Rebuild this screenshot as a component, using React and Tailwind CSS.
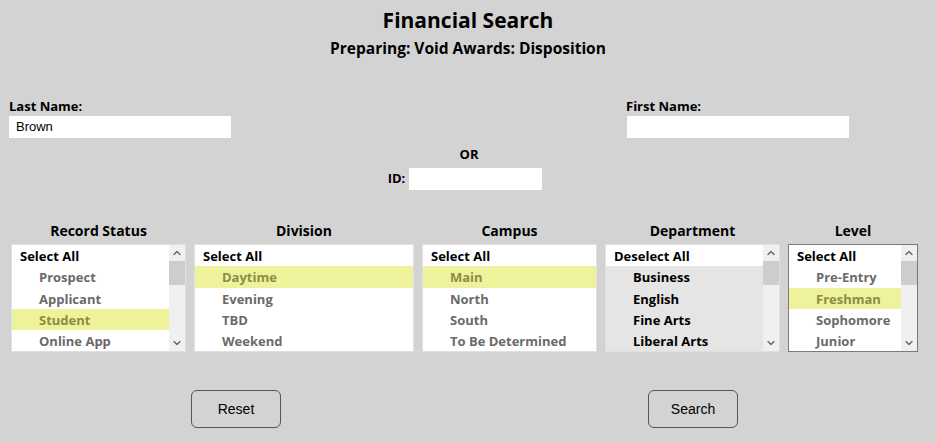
import { ChevronUp, ChevronDown } from 'lucide-react'

const fonte = "font-['Open_Sans',sans-serif]"

// Rolagem falsa no estilo da caixa de lista do Windows
function BarraRolagem() {
  return (
    <div className="w-[16px] bg-[#f0f0f0] flex flex-col items-center">
      <div className="h-[16px] flex items-center justify-center">
        <ChevronUp className="w-3 h-3 text-[#606060]" strokeWidth={2.5} />
      </div>
      <div className="w-full h-[24px] bg-[#cdcdcd]" />
      <div className="flex-1" />
      <div className="h-[16px] flex items-center justify-center">
        <ChevronDown className="w-3 h-3 text-[#606060]" strokeWidth={2.5} />
      </div>
    </div>
  )
}

function Lista({ titulo, largura, topo, itens, marcado, rolagem, foco, departamento }) {
  return (
    <div className="flex flex-col items-center" style={{ width: largura }}>
      <div className={`${fonte} text-[14px] font-bold text-black h-[28px] leading-[30px]`}>{titulo}</div>
      <div
        className={`w-full h-[108px] flex overflow-hidden border ${
          foco ? 'border-[#7a7a7a]' : 'border-[#e0e0e0]'
        } ${departamento ? 'bg-[#e5e5e5]' : 'bg-white'}`}
      >
        <div className="flex-1 flex flex-col">
          <div className={`${fonte} h-[21.25px] leading-[22px] pl-[8px] text-[13px] font-bold text-black bg-white`}>
            {topo}
          </div>
          {itens.map((item) => (
            <div
              key={item}
              className={`${fonte} h-[21.25px] leading-[22px] pl-[27px] text-[13px] font-bold whitespace-nowrap ${
                item === marcado
                  ? 'bg-[#eef39b] text-[#8c8c45]'
                  : departamento
                  ? 'text-black'
                  : 'text-[#6a6a6a]'
              }`}
            >
              {item}
            </div>
          ))}
        </div>
        {rolagem && <BarraRolagem />}
      </div>
    </div>
  )
}

export default function App() {
  return (
    <div className="w-[936px] h-[442px] bg-[#d3d3d3] overflow-hidden">
      {/* Cabeçalho */}
      <div className="flex flex-col items-center pt-[6px]">
        <h1 className={`${fonte} text-[21px] font-bold text-black leading-[28px]`}>Financial Search</h1>
        <p className={`${fonte} text-[15.5px] font-bold text-black leading-[28px]`}>
          Preparing: Void Awards: Disposition
        </p>
      </div>

      {/* Nomes */}
      <div className="flex mt-[34px] pl-[9px]">
        <div className="flex flex-col">
          <label className={`${fonte} text-[13px] font-bold text-black leading-[20px]`}>Last Name:</label>
          <div className="w-[222px] h-[22px] bg-white pl-[7px] flex items-center font-['Liberation_Sans',sans-serif] text-[13px] text-black">
            Brown
          </div>
        </div>
        <div className="flex flex-col ml-[395px]">
          <label className={`${fonte} text-[13px] font-bold text-black leading-[20px]`}>First Name:</label>
          <div className="w-[222px] h-[22px] bg-white ml-[1px]" />
        </div>
      </div>

      {/* OR / ID */}
      <div className="flex flex-col items-center">
        <div className={`${fonte} text-[13px] font-bold text-black leading-[32px] h-[30px] pl-[2px]`}>OR</div>
        <div className="flex items-center gap-[4px] pr-[6px]">
          <span className={`${fonte} text-[13px] font-bold text-black`}>ID:</span>
          <div className="w-[133px] h-[22px] bg-white" />
        </div>
      </div>

      {/* Listas */}
      <div className="flex gap-[8px] pl-[11px] mt-[26px]">
        <Lista
          titulo="Record Status"
          largura={175}
          topo="Select All"
          itens={['Prospect', 'Applicant', 'Student', 'Online App']}
          marcado="Student"
          rolagem
        />
        <Lista
          titulo="Division"
          largura={220}
          topo="Select All"
          itens={['Daytime', 'Evening', 'TBD', 'Weekend']}
          marcado="Daytime"
        />
        <Lista
          titulo="Campus"
          largura={175}
          topo="Select All"
          itens={['Main', 'North', 'South', 'To Be Determined']}
          marcado="Main"
        />
        <Lista
          titulo="Department"
          largura={175}
          topo="Deselect All"
          itens={['Business', 'English', 'Fine Arts', 'Liberal Arts']}
          rolagem
          departamento
        />
        <Lista
          titulo="Level"
          largura={130}
          topo="Select All"
          itens={['Pre-Entry', 'Freshman', 'Sophomore', 'Junior']}
          marcado="Freshman"
          rolagem
          foco
        />
      </div>

      {/* Botões */}
      <div className="flex mt-[38px] pl-[191px]">
        <button className="w-[90px] h-[38px] rounded-md border border-[#555] font-['Liberation_Sans',sans-serif] text-[14px] text-black">
          Reset
        </button>
        <button className="w-[90px] h-[38px] rounded-md border border-[#555] font-['Liberation_Sans',sans-serif] text-[14px] text-black ml-[367px]">
          Search
        </button>
      </div>
    </div>
  )
}
